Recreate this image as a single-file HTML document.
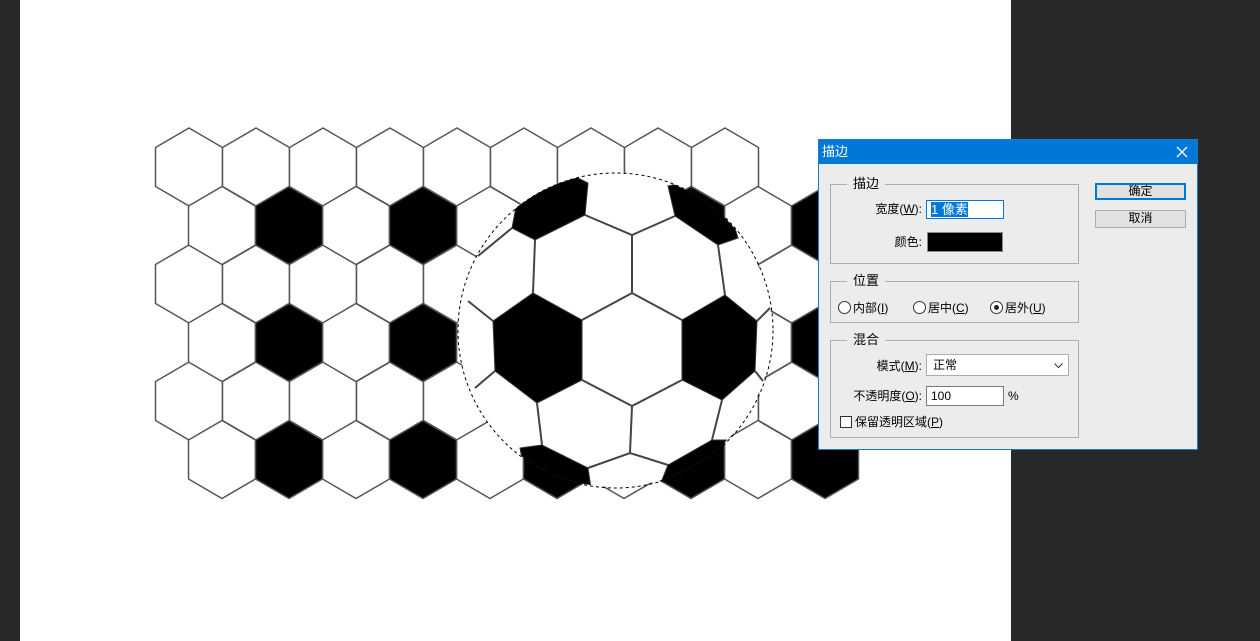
<!DOCTYPE html>
<html><head><meta charset="utf-8"><style>
*{margin:0;padding:0;box-sizing:border-box}
body{width:1260px;height:641px;background:#282828;position:relative;overflow:hidden;font-family:"Liberation Sans","Noto Sans CJK SC",sans-serif;font-size:12px;color:#000}
.a{position:absolute}
.grp{position:absolute;border:1px solid #adadad}
.gt{position:absolute;background:#ececec;padding:0 6px;top:-9px;left:16px;font-size:13px;line-height:16px}
.inp{position:absolute;background:#fff;border:1px solid #7a7a7a}
.lbl{position:absolute;text-align:right;line-height:16px}
.btn{position:absolute;background:#e1e1e1;border:1px solid #adadad;text-align:center;line-height:15px}
.rad{display:inline-block;width:13px;height:13px;border:1px solid #333;border-radius:50%;vertical-align:-2px;margin-right:2px;position:relative;background:#fff}
u{text-decoration:underline}
</style></head><body>
<div class="a" style="left:20px;top:0;width:991px;height:641px;background:#fff"></div>
<svg class="a" style="left:0;top:0" width="1260" height="641">
<defs>
<polygon id="h" points="0,-39 33.5,-19.5 33.5,19.5 0,39 -33.5,19.5 -33.5,-19.5" stroke="#555" stroke-width="1.5"/>
<clipPath id="cp"><circle cx="615" cy="330" r="157"/></clipPath>
</defs>
<g fill="#fff">
<use href="#h" x="189" y="167"/><use href="#h" x="256" y="167"/><use href="#h" x="323" y="167"/><use href="#h" x="390" y="167"/><use href="#h" x="457" y="167"/><use href="#h" x="524" y="167"/><use href="#h" x="591" y="167"/><use href="#h" x="658" y="167"/><use href="#h" x="725" y="167"/>
<use href="#h" x="189" y="284"/><use href="#h" x="256" y="284"/><use href="#h" x="323" y="284"/><use href="#h" x="390" y="284"/><use href="#h" x="457" y="284"/><use href="#h" x="524" y="284"/><use href="#h" x="591" y="284"/><use href="#h" x="658" y="284"/><use href="#h" x="725" y="284"/><use href="#h" x="792" y="284"/>
<use href="#h" x="189" y="401"/><use href="#h" x="256" y="401"/><use href="#h" x="323" y="401"/><use href="#h" x="390" y="401"/><use href="#h" x="457" y="401"/><use href="#h" x="524" y="401"/><use href="#h" x="591" y="401"/><use href="#h" x="658" y="401"/><use href="#h" x="725" y="401"/><use href="#h" x="792" y="401"/>
<use href="#h" x="222" y="225.5"/><use href="#h" x="356" y="225.5"/><use href="#h" x="490" y="225.5"/><use href="#h" x="624" y="225.5"/><use href="#h" x="758" y="225.5"/>
<use href="#h" x="222" y="342.5"/><use href="#h" x="356" y="342.5"/><use href="#h" x="490" y="342.5"/><use href="#h" x="624" y="342.5"/><use href="#h" x="758" y="342.5"/>
<use href="#h" x="222" y="459.5"/><use href="#h" x="356" y="459.5"/><use href="#h" x="490" y="459.5"/><use href="#h" x="624" y="459.5"/><use href="#h" x="758" y="459.5"/>
</g>
<g fill="#000">
<use href="#h" x="289" y="225.5"/><use href="#h" x="423" y="225.5"/><use href="#h" x="557" y="225.5"/><use href="#h" x="691" y="225.5"/><use href="#h" x="825" y="225.5"/>
<use href="#h" x="289" y="342.5"/><use href="#h" x="423" y="342.5"/><use href="#h" x="557" y="342.5"/><use href="#h" x="691" y="342.5"/><use href="#h" x="825" y="342.5"/>
<use href="#h" x="289" y="459.5"/><use href="#h" x="423" y="459.5"/><use href="#h" x="557" y="459.5"/><use href="#h" x="691" y="459.5"/><use href="#h" x="825" y="459.5"/>
</g>
<g clip-path="url(#cp)">
<circle cx="615" cy="330" r="157" fill="#fff"/>
<g fill="#000" stroke="#333" stroke-width="1">
<polygon points="533,293 582,320 582,380 537,403 495,371 493,321"/>
<polygon points="725,295 757,321 755,371 722,400 682,380 682,320"/>
<polygon points="512,228 535,240 585,215 588,183 562,170 520,185"/>
<polygon points="668,186 675,216 718,245 738,238 728,205 695,180"/>
<polygon points="520,448 542,445 588,468 592,495 560,495 525,475"/>
<polygon points="668,465 712,440 728,440 730,495 682,495 660,485"/>
</g>
<g stroke="#444" stroke-width="2" fill="none">
<polyline points="585,215 632,235 675,216"/>
<line x1="632" y1="235" x2="632" y2="293"/>
<polyline points="582,320 632,293 682,320"/>
<polyline points="582,380 632,406 682,380"/>
<line x1="535" y1="240" x2="533" y2="293"/>
<line x1="718" y1="245" x2="725" y2="295"/>
<line x1="537" y1="403" x2="542" y2="445"/>
<line x1="632" y1="406" x2="630" y2="453"/>
<polyline points="588,468 630,453 668,465"/>
<line x1="722" y1="400" x2="712" y2="440"/>
<line x1="493" y1="321" x2="468" y2="301"/>
<line x1="495" y1="371" x2="475" y2="388"/>
<line x1="512" y1="228" x2="478" y2="256"/>
<line x1="757" y1="321" x2="770" y2="308"/>
<line x1="755" y1="371" x2="763" y2="381"/>
</g>
</g>
<circle cx="615.5" cy="330.5" r="157.5" fill="none" stroke="#000" stroke-width="1" stroke-dasharray="3,3"/>
</svg>

<div class="a" style="left:818px;top:139px;width:380px;height:311px;background:#ececec;border:1px solid #1979ca">
<div class="a" style="left:0;top:0;width:378px;height:24px;background:#0078d7;color:#fff;font-size:13px;line-height:24px;padding-left:3px">描边</div>
<svg class="a" style="left:357px;top:6px" width="12" height="12"><path d="M1,1L11,11M11,1L1,11" stroke="#fff" stroke-width="1.3"/></svg>
</div>
<div class="grp" style="left:830px;top:184px;width:249px;height:80px"><div class="gt">描边</div></div>
<div class="lbl" style="left:840px;top:201px;width:82px">宽度(<u>W</u>):</div>
<div class="inp" style="left:926px;top:200px;width:78px;height:19px;border-color:#0078d7"><span style="position:absolute;left:4px;top:1px;background:#0078d7;color:#fff;line-height:15px;font-size:13px">1 像素</span></div>
<div class="lbl" style="left:840px;top:234px;width:82px">颜色:</div>
<div class="a" style="left:927px;top:232px;width:76px;height:20px;background:#000;border:1px solid #888"></div>

<div class="grp" style="left:830px;top:281px;width:249px;height:42px"><div class="gt">位置</div></div>
<div class="a" style="left:838px;top:300px;line-height:16px"><span class="rad"></span>内部(<u>I</u>)</div>
<div class="a" style="left:913px;top:300px;line-height:16px"><span class="rad"></span>居中(<u>C</u>)</div>
<div class="a" style="left:990px;top:300px;line-height:16px"><span class="rad"><span style="position:absolute;left:3px;top:3px;width:5px;height:5px;border-radius:50%;background:#222"></span></span>居外(<u>U</u>)</div>

<div class="grp" style="left:830px;top:340px;width:249px;height:98px"><div class="gt">混合</div></div>
<div class="lbl" style="left:840px;top:358px;width:82px">模式(<u>M</u>):</div>
<div class="inp" style="left:926px;top:354px;width:143px;height:22px;border-color:#adadad"><span style="position:absolute;left:6px;top:3px;line-height:15px">正常</span><svg style="position:absolute;right:5px;top:8px" width="9" height="6"><path d="M0.5,0.5L4.5,4.5L8.5,0.5" stroke="#333" fill="none"/></svg></div>
<div class="lbl" style="left:830px;top:388px;width:92px">不透明度(<u>O</u>):</div>
<div class="inp" style="left:926px;top:386px;width:78px;height:20px"><span style="position:absolute;left:4px;top:2px;line-height:15px">100</span></div>
<div class="a" style="left:1008px;top:388px;line-height:16px">%</div>
<div class="a" style="left:840px;top:416px;width:12px;height:12px;border:1px solid #333;background:#fff"></div>
<div class="a" style="left:855px;top:414px;line-height:16px">保留透明区域(<u>P</u>)</div>

<div class="btn" style="left:1095px;top:183px;width:91px;height:17px;border:2px solid #0078d7;line-height:13px">确定</div>
<div class="btn" style="left:1095px;top:210px;width:91px;height:18px">取消</div>
</body></html>
